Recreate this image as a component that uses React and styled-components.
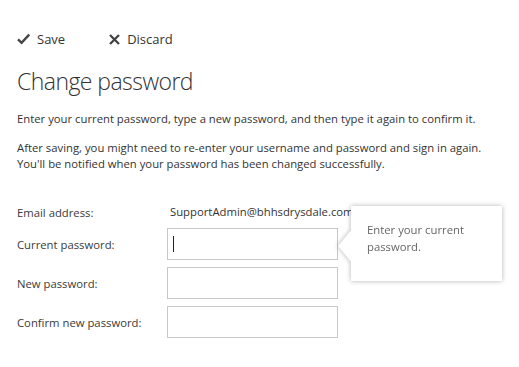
import React from "react";
import styled, { createGlobalStyle } from "styled-components";

const Global = createGlobalStyle`
  html, body { margin: 0; padding: 0; background: #fff; }
  body { font-family: "Open Sans", "Noto Sans", sans-serif; color: #333; }
`;

const Page = styled.div`
  position: relative;
  padding: 28px 17px 0 17px;
  width: 519px;
  height: 367px;
  box-sizing: border-box;
  overflow: hidden;
`;

const Toolbar = styled.div`
  display: flex;
  align-items: center;
  gap: 44px;
  height: 22px;
`;

const ToolButton = styled.button`
  display: flex;
  align-items: center;
  gap: ${(p) => p.$gap}px;
  border: none;
  background: none;
  padding: 0;
  font-family: inherit;
  font-size: 13px;
  color: #333;
  cursor: pointer;
`;

const Title = styled.h1`
  margin: 15px 0 0 0;
  font-weight: 300;
  font-size: 23px;
  line-height: 32px;
  color: #333;
  letter-spacing: -0.55px;
`;

const Para = styled.p`
  margin: ${(p) => p.$top}px 0 0 0;
  font-size: 11.3px;
  line-height: 16px;
  color: #333;
`;

const Form = styled.div`
  position: relative;
  margin-top: 31px;
  display: grid;
  grid-template-columns: 150px 171px;
  row-gap: 7px;
  align-items: center;
`;

const Label = styled.div`
  font-size: 11.3px;
  color: #3a3a3a;
`;

const Value = styled.div`
  font-size: 11.3px;
  color: #333;
  white-space: nowrap;
  height: 18px;
  line-height: 18px;
  padding-left: 3px;
`;

const Input = styled.div`
  box-sizing: border-box;
  height: 32px;
  border: 1px solid #c8c8c8;
  background: #fff;
  display: flex;
  align-items: center;
  padding-left: 5px;
`;

const Caret = styled.span`
  display: block;
  width: 1px;
  height: 16px;
  background: #222;
`;

const Tooltip = styled.div`
  position: absolute;
  left: 321px;
  top: 3px;
  width: 164px;
  height: 75px;
  filter: drop-shadow(0 0 2.5px rgba(0, 0, 0, 0.3));
`;

const TipBox = styled.div`
  position: absolute;
  left: 13px;
  top: 0;
  right: 0;
  bottom: 0;
  box-sizing: border-box;
  background: #fff;
  padding: 15px 16px;
  font-size: 11.3px;
  line-height: 17px;
  color: #666;
`;

const Arrow = styled.svg`
  position: absolute;
  left: 0;
  top: 23px;
`;

export default function App() {
  return (
    <>
      <Global />
      <Page>
        <Toolbar>
          <ToolButton $gap={7}>
            <svg width="13" height="12" viewBox="0 0 13 12">
              <path d="M1 6.3 L4.6 9.8 L12.2 1.6" fill="none" stroke="#444" strokeWidth="2.4" />
            </svg>
            Save
          </ToolButton>
          <ToolButton $gap={7}>
            <svg width="11" height="11" viewBox="0 0 11 11">
              <path d="M1 1 L10 10 M10 1 L1 10" fill="none" stroke="#444" strokeWidth="2.3" />
            </svg>
            Discard
          </ToolButton>
        </Toolbar>
        <Title>Change password</Title>
        <Para $top={14}>
          Enter your current password, type a new password, and then type it again to confirm it.
        </Para>
        <Para $top={13}>
          After saving, you might need to re-enter your username and password and sign in again.
          <br />
          You'll be notified when your password has been changed successfully.
        </Para>
        <Form>
          <Label>Email address:</Label>
          <Value>SupportAdmin@bhhsdrysdale.com</Value>
          <Label>Current password:</Label>
          <Input>
            <Caret />
          </Input>
          <Label>New password:</Label>
          <Input />
          <Label>Confirm new password:</Label>
          <Input />
          <Tooltip>
            <Arrow width="14" height="34" viewBox="0 0 14 34">
              <path d="M14 0 L0 17 L14 34 Z" fill="#fff" />
            </Arrow>
            <TipBox>Enter your current password.</TipBox>
          </Tooltip>
        </Form>
      </Page>
    </>
  );
}
